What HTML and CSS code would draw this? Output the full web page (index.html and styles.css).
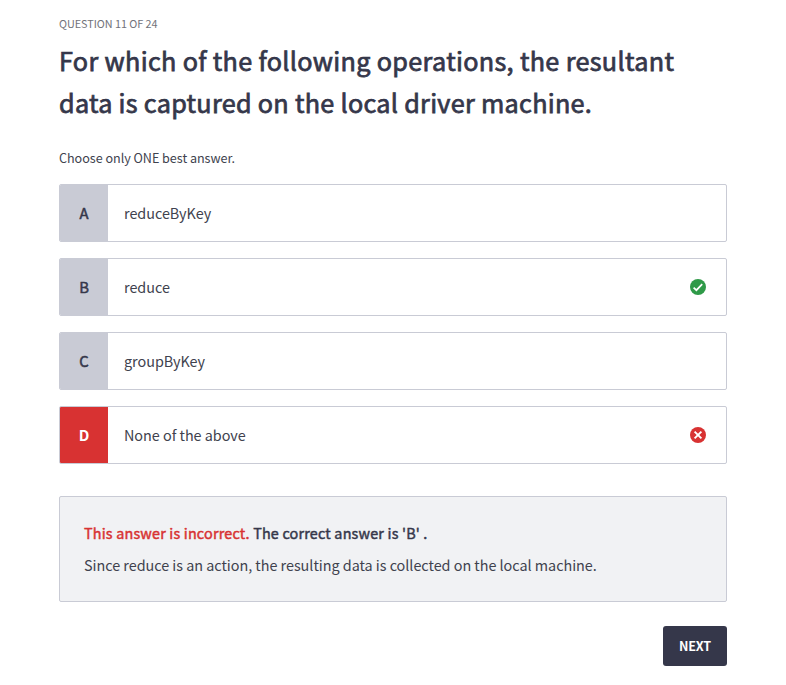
FILE: index.html
```html
<!DOCTYPE html>
<html lang="en">
<head>
<meta charset="utf-8">
<title>Question 11 of 24</title>
<link rel="stylesheet" href="styles.css">
</head>
<body>
<main class="quiz">
  <p class="progress"><span>QUESTION 11 OF 24</span></p>
  <h1 class="question"><span class="line line-one">For which of the following operations, the resultant</span> <span class="line line-two">data is captured on the local driver machine.</span></h1>
  <p class="hint"><span>Choose only ONE best answer.</span></p>
  <ol class="answers">
    <li class="answer"><span class="letter">A</span><span class="label">reduceByKey</span></li>
    <li class="answer"><span class="letter">B</span><span class="label">reduce</span>
      <svg class="mark" viewBox="0 0 16 16"><circle cx="8" cy="8" r="8" fill="#2f9a48"/><path d="M3.6 8.6l2.8 2.6 5.8-6" fill="none" stroke="#fff" stroke-width="1.7"/></svg></li>
    <li class="answer"><span class="letter">C</span><span class="label">groupByKey</span></li>
    <li class="answer wrong"><span class="letter">D</span><span class="label">None of the above</span>
      <svg class="mark" viewBox="0 0 16 16"><circle cx="8" cy="8" r="8" fill="#d83232"/><path d="M4.6 4.6l6.8 6.8M11.4 4.6l-6.8 6.8" fill="none" stroke="#fff" stroke-width="1.9"/></svg></li>
  </ol>
  <section class="feedback">
    <p class="verdict"><span class="incorrect">This answer is incorrect.</span> <span class="correct">The correct answer is 'B' .</span></p>
    <p class="reason"><span>Since reduce is an action, the resulting data is collected on the local machine.</span></p>
  </section>
  <div class="actions"><button class="next" type="button">NEXT</button></div>
</main>
</body>
</html>
```
FILE: styles.css
```css
* { box-sizing: border-box; margin: 0; padding: 0; }
body { background: #fff; color: #35374a; font-family: "Noto Sans CJK SC", "Noto Sans", sans-serif; }
.quiz { width: 668px; margin-left: 59px; padding-top: 14px; }
.progress { font-size: 10.8px; line-height: 18px; letter-spacing: -0.03px; color: #71727a; }
.question { margin-top: 7px; font-size: 25.2px; line-height: 42px; font-weight: 400; letter-spacing: 0.33px; -webkit-text-stroke: 0.75px #35374a; }
.line { display: block; white-space: nowrap; }
.line-two { letter-spacing: 0.29px; }
.hint { margin-top: 24px; font-size: 12.6px; line-height: 21px; letter-spacing: -0.03px; color: #40424e; }
.answers { margin-top: 16px; list-style: none; display: flex; flex-direction: column; gap: 16px; }
.answer { height: 58px; display: flex; align-items: center; border: 1px solid #c9cbd5; border-radius: 2px; overflow: hidden; }
.letter { width: 48px; padding-bottom: 2px; align-self: stretch; display: flex; align-items: center; justify-content: center; background: #c9cbd5; font-size: 14.8px; -webkit-text-stroke: 0.5px currentColor; }
.wrong .letter { background: #d83232; color: #fff; font-weight: 700; -webkit-text-stroke: 0; }
.label { margin-left: 16px; flex: 1; font-size: 14.4px; line-height: 24px; letter-spacing: -0.03px; color: #40424e; }
.mark { width: 16px; height: 16px; margin-right: 20px; }
.feedback { margin-top: 32px; height: 106px; padding: 24px; background: #f1f2f4; border: 1px solid #c9cbd5; border-radius: 2px; }
.verdict { font-size: 14.4px; line-height: 24px; letter-spacing: 0.18px; -webkit-text-stroke: 0.45px currentColor; }
.incorrect { color: #d83232; }
.reason { margin-top: 8px; font-size: 14.4px; line-height: 24px; letter-spacing: -0.03px; color: #40424e; }
.actions { margin-top: 24px; display: flex; justify-content: flex-end; }
.next { width: 64px; height: 40px; padding-bottom: 2px; border: 0; border-radius: 3px; background: #35374a; color: #fff; font: 600 12.6px "Noto Sans CJK SC", sans-serif; letter-spacing: -0.2px; }
```
